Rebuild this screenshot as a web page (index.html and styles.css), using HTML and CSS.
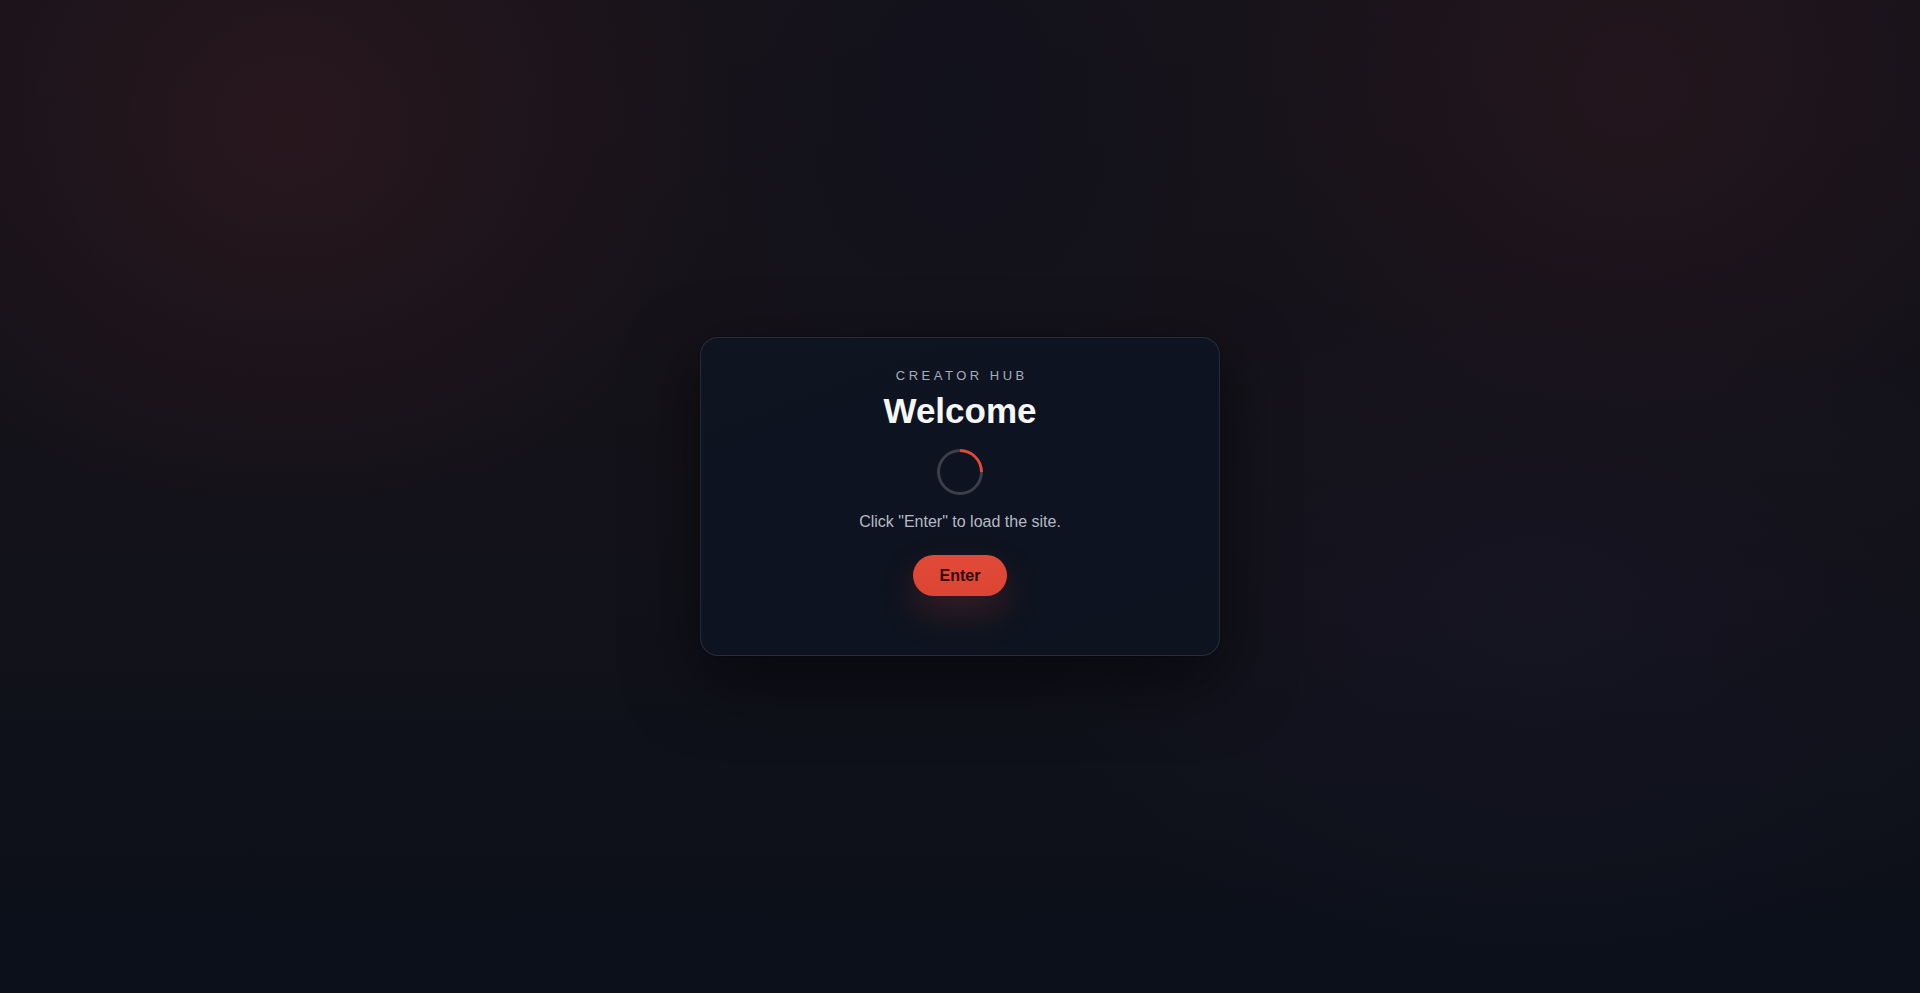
FILE: index.html
```html
<!DOCTYPE html>
<html lang="en">
<head>
<meta charset="utf-8">
<title>Creator Hub</title>
<link rel="stylesheet" href="styles.css">
</head>
<body>
  <main class="stage">
    <section class="card">
      <div class="eyebrow">CREATOR HUB</div>
      <h1 class="title">Welcome</h1>
      <div class="spinner" aria-hidden="true"></div>
      <p class="hint">Click "Enter" to load the site.</p>
      <button class="enter-btn" type="button">Enter</button>
    </section>
  </main>
</body>
</html>
```

FILE: styles.css
```css
* { box-sizing: border-box; }

html, body {
  margin: 0;
  height: 100%;
}

body {
  font-family: "Liberation Sans", Arial, sans-serif;
  background-color: #0d1019;
  background-image:
    radial-gradient(ellipse 440px 400px at 15% 13%, rgba(58, 26, 32, 0.5), rgba(58, 26, 32, 0) 100%),
    radial-gradient(ellipse 400px 360px at 85% 9%, rgba(52, 24, 32, 0.45), rgba(52, 24, 32, 0) 100%),
    radial-gradient(ellipse 260px 320px at 50% 10%, rgba(14, 16, 30, 0.6), rgba(14, 16, 30, 0) 100%),
    radial-gradient(ellipse 520px 360px at 80% 62%, rgba(26, 22, 42, 0.45), rgba(26, 22, 42, 0) 100%),
    linear-gradient(180deg, #17131a 0%, #141219 45%, #0f111a 75%, #0c101a 100%);
  color: #e8eaf0;
}

.stage {
  min-height: 100vh;
  display: grid;
  place-items: center;
}

.card {
  width: 520px;
  padding: 30px 32px 59px;
  border-radius: 18px;
  border: 1px solid rgba(255, 255, 255, 0.11);
  background: linear-gradient(160deg, #0f1421 0%, #0d1320 60%, #0d1420 100%);
  box-shadow: 0 24px 70px rgba(0, 0, 0, 0.55), 0 0 0 1px rgba(0, 0, 0, 0.2);
  display: flex;
  flex-direction: column;
  align-items: center;
  text-align: center;
}

.eyebrow {
  font-size: 13px;
  line-height: 16px;
  letter-spacing: 0.27em;
  margin-right: -0.27em;
  color: #a7adb9;
}

.title {
  margin: 6px 0 0;
  font-size: 35px;
  line-height: 42px;
  font-weight: 700;
  color: #f6f7fa;
}

.spinner {
  margin-top: 17px;
  width: 46px;
  height: 46px;
  border-radius: 50%;
  border: 3px solid #3a3f49;
  border-top-color: #e0493a;
  transform: rotate(45deg);
}

.hint {
  margin: 16px 0 0;
  font-size: 16px;
  line-height: 22px;
  color: #b6bac4;
}

.enter-btn {
  margin-top: 22px;
  height: 41px;
  padding: 0 27px;
  border: 0;
  border-radius: 999px;
  background: linear-gradient(180deg, #e24a38 0%, #dc4533 100%);
  color: #2a0906;
  font-family: "Liberation Sans", Arial, sans-serif;
  font-size: 16px;
  font-weight: 700;
  cursor: pointer;
  box-shadow: 0 16px 36px rgba(214, 66, 46, 0.22);
}
```
